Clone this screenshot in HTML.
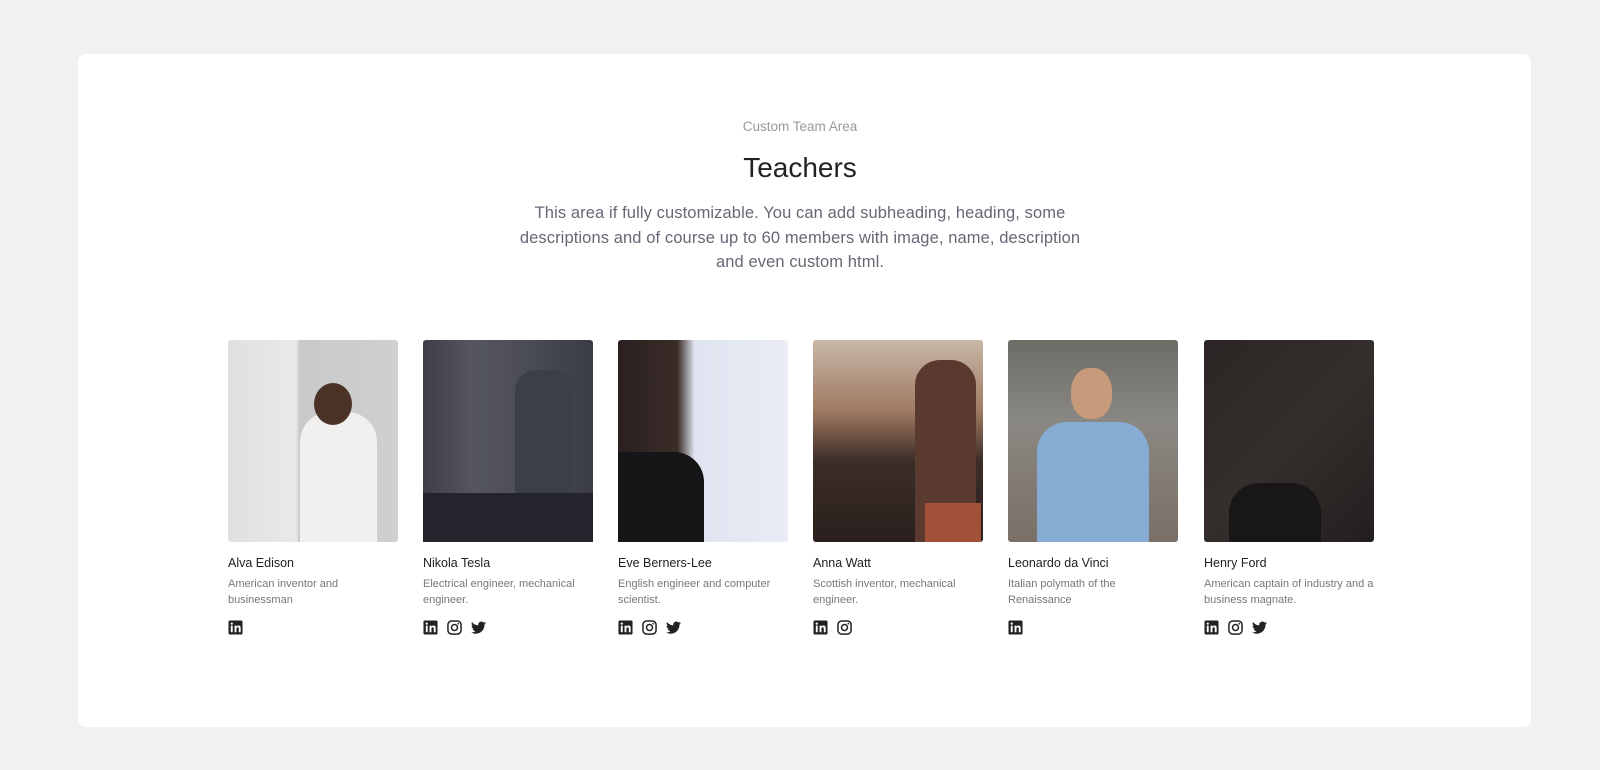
<!DOCTYPE html>
<html><head><meta charset="utf-8"><style>
*{margin:0;padding:0;box-sizing:border-box}
body{width:1600px;height:770px;background:#f1f1f1;font-family:"Liberation Sans",sans-serif;position:relative;overflow:hidden}
.card{position:absolute;left:78px;top:54px;width:1453px;height:673px;background:#fff;border-radius:8px}
.sub{position:absolute;top:119px;left:0;width:100%;text-align:center;font-size:13.5px;color:#999}
h1{position:absolute;top:152px;left:0;width:100%;text-align:center;font-size:28px;font-weight:normal;color:#222}
.desc{position:absolute;top:201px;left:505px;width:590px;text-align:center;font-size:16.5px;line-height:24.5px;color:#676775;letter-spacing:0.1px}
.m{position:absolute;top:340px;width:170px}
.img{width:170px;height:202px;border-radius:3px}
.n{margin-top:14px;font-size:12.5px;color:#222}
.d{margin-top:6px;font-size:11px;line-height:16px;color:#777;height:32px;width:155px}
.ic{margin-top:12px;display:flex;gap:9px}
.ic svg{width:15px;height:15px}
</style></head><body>
<div class="card"></div>
<div class="sub">Custom Team Area</div>
<h1>Teachers</h1>
<div class="desc">This area if fully customizable. You can add subheading, heading, some descriptions and of course up to 60 members with image, name, description and even custom html.</div>

<svg width="0" height="0" style="position:absolute"><defs>
<symbol id="li" viewBox="0 0 16 16"><rect x="0.5" y="0.5" width="15" height="15" rx="1.5" fill="#222"/><rect x="3" y="6" width="2" height="7" fill="#fff"/><circle cx="4" cy="3.8" r="1.2" fill="#fff"/><path d="M7 6h2v1c.5-.8 1.3-1.2 2.3-1.2 1.6 0 2.2 1 2.2 2.7V13h-2V9c0-.8-.3-1.3-1-1.3S9 8.2 9 9v4H7z" fill="#fff"/></symbol>
<symbol id="ig" viewBox="0 0 16 16"><rect x="1" y="1" width="14" height="14" rx="4" fill="none" stroke="#222" stroke-width="1.6"/><circle cx="8" cy="8" r="3.2" fill="none" stroke="#222" stroke-width="1.6"/><circle cx="12" cy="4" r="0.9" fill="#222"/></symbol>
<symbol id="tw" viewBox="0 0 16 16"><path d="M16 3.2c-.6.3-1.2.4-1.9.5.7-.4 1.2-1 1.4-1.8-.6.4-1.3.6-2.1.8A3.3 3.3 0 0 0 7.8 5.7 9.3 9.3 0 0 1 1.1 2.2a3.3 3.3 0 0 0 1 4.4c-.5 0-1-.2-1.5-.4 0 1.6 1.1 2.9 2.6 3.2-.5.1-1 .2-1.5.1.4 1.3 1.6 2.3 3.1 2.3A6.6 6.6 0 0 1 0 13.1 9.3 9.3 0 0 0 5 14.6c6 0 9.4-5 9.4-9.4v-.4c.7-.5 1.2-1 1.6-1.600z" fill="#222"/></symbol>
</defs></svg>

<div class="m" style="left:228px"><div class="img" style="background:linear-gradient(90deg,#dfe1df 0%,#e8e9e8 40%,#c8cac9 42%,#cfd1d0 100%);position:relative"><div style="position:absolute;left:72px;top:72px;width:77px;height:130px;background:#f2f0ee;border-radius:30px 30px 0 0"></div><div style="position:absolute;left:86px;top:43px;width:38px;height:42px;background:#4a3326;border-radius:50%"></div></div>
<div class="n">Alva Edison</div><div class="d">American inventor and businessman</div>
<div class="ic"><svg><use href="#li"/></svg></div></div>

<div class="m" style="left:423px"><div class="img" style="background:linear-gradient(90deg,#3d3e4a 0%,#55565f 30%,#4b4c58 60%,#3a3b47 100%);position:relative"><div style="position:absolute;left:92px;top:30px;width:56px;height:172px;background:#3c3f48;border-radius:20px 20px 0 0"></div><div style="position:absolute;left:0;top:153px;width:170px;height:49px;background:#23242c"></div></div>
<div class="n">Nikola Tesla</div><div class="d">Electrical engineer, mechanical engineer.</div>
<div class="ic"><svg><use href="#li"/></svg><svg><use href="#ig"/></svg><svg><use href="#tw"/></svg></div></div>

<div class="m" style="left:618px"><div class="img" style="background:linear-gradient(90deg,#2a2020 0%,#3a2c28 35%,#dfe4f0 45%,#e9ecf5 100%);position:relative"><div style="position:absolute;left:0;top:112px;width:86px;height:90px;background:#161518;border-radius:0 30px 0 0"></div></div>
<div class="n">Eve Berners-Lee</div><div class="d">English engineer and computer scientist.</div>
<div class="ic"><svg><use href="#li"/></svg><svg><use href="#ig"/></svg><svg><use href="#tw"/></svg></div></div>

<div class="m" style="left:813px"><div class="img" style="background:linear-gradient(180deg,#c7b7a6 0%,#a07a62 35%,#3c2d28 60%,#2a201d 100%);position:relative"><div style="position:absolute;left:102px;top:20px;width:61px;height:182px;background:#5a3a2e;border-radius:25px 25px 0 0"></div><div style="position:absolute;left:112px;top:163px;width:56px;height:39px;background:#a3503a"></div></div>
<div class="n">Anna Watt</div><div class="d">Scottish inventor, mechanical engineer.</div>
<div class="ic"><svg><use href="#li"/></svg><svg><use href="#ig"/></svg></div></div>

<div class="m" style="left:1008px"><div class="img" style="background:linear-gradient(180deg,#6d6b66 0%,#8a8883 40%,#7a6f66 100%);position:relative"><div style="position:absolute;left:29px;top:82px;width:112px;height:120px;background:#86acd4;border-radius:30px 30px 0 0"></div><div style="position:absolute;left:63px;top:28px;width:41px;height:51px;background:#c89a7c;border-radius:45%"></div></div>
<div class="n">Leonardo da Vinci</div><div class="d" style="width:130px">Italian polymath of the Renaissance</div>
<div class="ic"><svg><use href="#li"/></svg></div></div>

<div class="m" style="left:1204px"><div class="img" style="background:linear-gradient(135deg,#2b2625 0%,#342e2c 50%,#241f1f 100%);position:relative"><div style="position:absolute;left:25px;top:143px;width:92px;height:59px;background:#181617;border-radius:30px 30px 0 0"></div></div>
<div class="n">Henry Ford</div><div class="d" style="width:170px">American captain of industry and a business magnate.</div>
<div class="ic"><svg><use href="#li"/></svg><svg><use href="#ig"/></svg><svg><use href="#tw"/></svg></div></div>
</body></html>
